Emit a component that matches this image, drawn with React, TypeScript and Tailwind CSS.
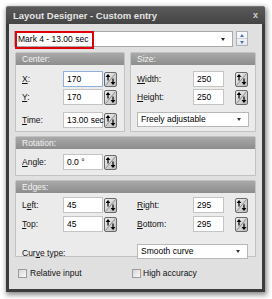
import type { ReactNode } from "react";

const font = { fontFamily: '"Liberation Sans", Arial, sans-serif' };

function Spin() {
  return (
    <svg width="13" height="15" viewBox="0 0 13 15" className="shrink-0">
      <defs>
        <linearGradient id="sg" x1="0" y1="0" x2="1" y2="1">
          <stop offset="0" stopColor="#f2f2f2" />
          <stop offset="1" stopColor="#b9b9b9" />
        </linearGradient>
      </defs>
      <rect x="0.5" y="0.5" width="12" height="14" rx="1.5" fill="url(#sg)" stroke="#6a6a6a" />
      <line x1="1.5" y1="13.5" x2="11.5" y2="1.5" stroke="#8c8c8c" strokeWidth="1" />
      <polygon points="4,2 1.6,5 6.4,5" fill="#000" />
      <line x1="4" y1="5" x2="4" y2="8.5" stroke="#000" strokeWidth="1.2" />
      <polygon points="9,13 6.6,10 11.4,10" fill="#000" />
      <line x1="9" y1="6.5" x2="9" y2="10" stroke="#000" strokeWidth="1.2" />
    </svg>
  );
}

function Label({ pre = "", u, post, w }: { pre?: string; u: string; post: string; w: string }) {
  return (
    <span className={`${w} shrink-0 text-[8.5px] text-[#111]`}>
      {pre}
      <span className="underline underline-offset-1">{u}</span>
      {post}
    </span>
  );
}

function Field({ value, w, focus }: { value: string; w: string; focus?: boolean }) {
  return (
    <div
      className={`${w} h-[16px] shrink-0 bg-white border ${
        focus ? "border-[#8fb0d8]" : "border-[#c4c4c4]"
      } flex items-center pl-[3px] text-[8.5px] text-black whitespace-nowrap`}
    >
      {value}
    </div>
  );
}

function Select({ value, w }: { value: string; w: string }) {
  return (
    <div className={`${w} h-[15px] bg-white border border-[#b8b8b8] flex items-center justify-between pl-[3px] pr-[7px] text-[8.5px] text-black`}>
      <span>{value}</span>
      <span className="w-0 h-0 border-l-[2.5px] border-r-[2.5px] border-t-[3px] border-l-transparent border-r-transparent border-t-[#333]" />
    </div>
  );
}

function Group({ title, className, children }: { title: string; className: string; children: ReactNode }) {
  return (
    <div className={`${className} bg-[#ebebeb] border border-[#c2c2c2] rounded-t-[2px] flex flex-col`}>
      <div className="h-[12px] bg-gradient-to-b from-[#a9a9a9] to-[#8d8d8d] flex items-center pl-[6px] text-[8.5px] text-[#f2f2f2] shrink-0">
        {title}
      </div>
      <div className="pl-[6px] flex flex-col">{children}</div>
    </div>
  );
}

export default function App() {
  return (
    <div className="w-[272px] h-[299px] bg-white pt-[6px] pl-[6px]" style={font}>
      <div className="w-[259px] h-[286px] bg-[#3c3c3c] rounded-t-[3px] flex flex-col shadow-[1px_2px_5px_1px_rgba(0,0,0,0.45)]">
        {/* Title bar */}
        <div className="h-[18px] shrink-0 bg-gradient-to-b from-[#5a5a5a] to-[#444] rounded-t-[3px] border-t border-[#777] flex items-center justify-between pl-[7px] pr-[7px]">
          <span className="text-[9.5px] font-bold text-[#e4e4e4] mt-[1px]">Layout Designer - Custom entry</span>
          <span className="text-[9px] font-bold text-[#cfcfcf] leading-none">x</span>
        </div>

        {/* Body */}
        <div className="flex-1 mx-[3px] mb-[3px] bg-[#e0e0e0] px-[6px] flex flex-col">
          {/* Entry combo */}
          <div className="mt-[7px] -ml-[1px] flex items-start">
            <div className="relative w-[219px] h-[16px] bg-white border border-[#a8a8a8] flex items-center justify-between pl-[3px] pr-[7px] text-[8.5px] text-black">
              <span>Mark 4 - 13.00 sec</span>
              <span className="w-0 h-0 border-l-[2.5px] border-r-[2.5px] border-t-[3px] border-l-transparent border-r-transparent border-t-[#222]" />
              <div className="absolute left-0 -top-px w-[79px] h-[18px] border-2 border-[#e0000c]" />
            </div>
            <div className="ml-[3px] w-[12px] h-[15px] border border-[#a9b3bd] bg-gradient-to-b from-[#fbfbfb] to-[#e9e9e9] flex flex-col">
              <div className="flex-1 flex items-center justify-center border-b border-[#c9d0d8]">
                <span className="w-0 h-0 border-l-[2.5px] border-r-[2.5px] border-b-[3px] border-l-transparent border-r-transparent border-b-[#4f76b3]" />
              </div>
              <div className="flex-1 flex items-center justify-center">
                <span className="w-0 h-0 border-l-[2.5px] border-r-[2.5px] border-t-[3px] border-l-transparent border-r-transparent border-t-[#4f76b3]" />
              </div>
            </div>
          </div>

          {/* Center / Size */}
          <div className="mt-[5px] flex gap-[5px]">
            <Group title="Center:" className="w-[110px] h-[80px]">
              <div className="mt-[6px] flex items-center">
                <Label u="X" post=":" w="w-[41px]" />
                <Field value="170" w="w-[40px]" focus />
                <div className="ml-px"><Spin /></div>
              </div>
              <div className="mt-[2px] flex items-center">
                <Label u="Y" post=":" w="w-[41px]" />
                <Field value="170" w="w-[40px]" />
                <div className="ml-px"><Spin /></div>
              </div>
              <div className="mt-[7px] flex items-center">
                <Label u="T" post="ime:" w="w-[41px]" />
                <Field value="13.00 sec" w="w-[40px]" />
                <div className="ml-px relative"><Spin /></div>
              </div>
            </Group>
            <Group title="Size:" className="flex-1 h-[80px]">
              <div className="mt-[6px] flex items-center">
                <Label u="W" post="idth:" w="w-[56px]" />
                <Field value="250" w="w-[31px]" />
                <div className="ml-[11px]"><Spin /></div>
              </div>
              <div className="mt-[2px] flex items-center">
                <Label u="H" post="eight:" w="w-[56px]" />
                <Field value="250" w="w-[31px]" />
                <div className="ml-[11px]"><Spin /></div>
              </div>
              <div className="mt-[7px]">
                <Select value="Freely adjustable" w="w-[112px]" />
              </div>
            </Group>
          </div>

          {/* Rotation */}
          <Group title="Rotation:" className="mt-[4px] h-[40px]">
            <div className="mt-[5px] flex items-center">
              <Label u="A" post="ngle:" w="w-[41px]" />
              <Field value="0.0 °" w="w-[40px]" />
              <div className="ml-px"><Spin /></div>
            </div>
          </Group>

          {/* Edges */}
          <Group title="Edges:" className="mt-[4px] h-[77px]">
            <div className="mt-[4px] flex items-center">
              <div className="w-[115px] flex items-center">
                <Label pre="L" u="e" post="ft:" w="w-[41px]" />
                <Field value="45" w="w-[40px]" />
                <div className="ml-px"><Spin /></div>
              </div>
              <Label u="R" post="ight:" w="w-[56px]" />
              <Field value="295" w="w-[31px]" />
              <div className="ml-[11px]"><Spin /></div>
            </div>
            <div className="mt-[3px] flex items-center">
              <div className="w-[115px] flex items-center">
                <Label u="T" post="op:" w="w-[41px]" />
                <Field value="45" w="w-[40px]" />
                <div className="ml-px"><Spin /></div>
              </div>
              <Label u="B" post="ottom:" w="w-[56px]" />
              <Field value="295" w="w-[31px]" />
              <div className="ml-[11px]"><Spin /></div>
            </div>
            <div className="mt-[7px] flex items-center">
              <div className="w-[115px]">
                <Label pre="Cur" u="v" post="e type:" w="w-[80px]" />
              </div>
              <Select value="Smooth curve" w="w-[111px]" />
            </div>
          </Group>

          {/* Checkboxes */}
          <div className="mt-[10px] flex items-center text-[8.5px] text-[#111]">
            <div className="w-[117px] pl-[3px] flex items-center gap-[3px]">
              <span className="w-[9px] h-[9px] border border-[#9c9c9c] bg-gradient-to-br from-[#d6d6d6] to-[#fafafa]" />
              <span>Relative input</span>
            </div>
            <div className="flex items-center gap-[2px]">
              <span className="w-[9px] h-[9px] border border-[#9c9c9c] bg-gradient-to-br from-[#d6d6d6] to-[#fafafa]" />
              <span>High accuracy</span>
            </div>
          </div>
        </div>
      </div>
    </div>
  );
}
